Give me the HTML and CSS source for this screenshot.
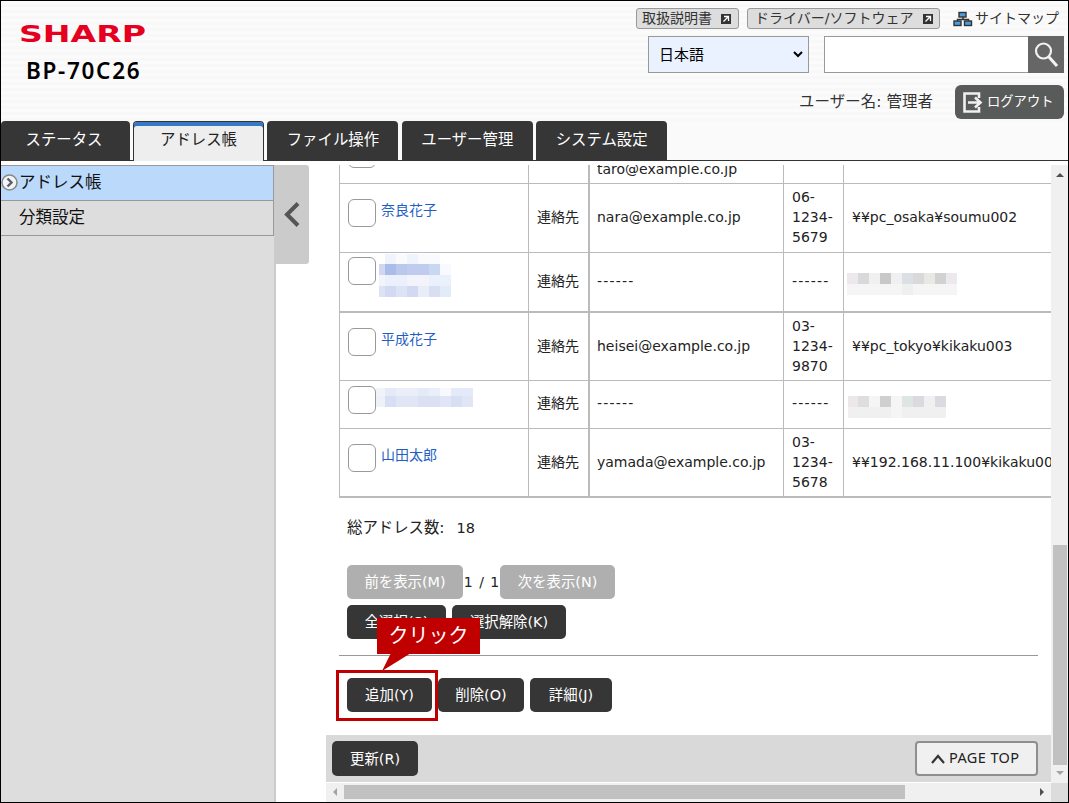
FILE: index.html
```
<!DOCTYPE html>
<html lang="ja">
<head>
  <meta charset="UTF-8" />
  <meta name="viewport" content="width=device-width, initial-scale=1.0" />
  <title>BP-70C26 アドレス帳</title>
  <link rel="stylesheet" href="styles.css">
</head>
<body>
  <div class="window">
    <header class="header">
      <div class="brand">
        <svg class="logo" width="130" height="24" viewBox="0 0 130 24">
          <text x="0" y="19" textLength="127" lengthAdjust="spacingAndGlyphs">SHARP</text>
        </svg>
        <h1 class="model">BP-70C26</h1>
      </div>
      <div class="tools">
        <div class="links">
          <a class="link-btn manual">取扱説明書
            <svg width="10" height="10" viewBox="0 0 10 10"><rect width="10" height="10" fill="#333"/><path d="M3 2.5h4.500v4.500M7.500 2.500L2.500 7.500" stroke="#fff" stroke-width="1.300" fill="none"/></svg>
          </a>
          <a class="link-btn driver">ドライバー/ソフトウェア
            <svg width="10" height="10" viewBox="0 0 10 10"><rect width="10" height="10" fill="#333"/><path d="M3 2.5h4.500v4.500M7.500 2.500L2.500 7.500" stroke="#fff" stroke-width="1.300" fill="none"/></svg>
          </a>
          <a class="sitemap">
            <svg width="20" height="16" viewBox="0 0 20 16">
              <path d="M10 5v4M4.500 11V8.500h11V11" stroke="#333" stroke-width="1.500" fill="none"/>
              <g fill="#4a9be0" stroke="#333" stroke-width="1.400">
                <rect x="6" y="1.500" width="7" height="4.500"/>
                <rect x="1" y="10" width="7" height="4.500"/>
                <rect x="11.500" y="10" width="7" height="4.500"/>
              </g>
            </svg>
            サイトマップ
          </a>
        </div>
        <div class="search-row">
          <div class="select"><span>日本語</span>
            <svg width="10" height="7" viewBox="0 0 10 7"><path d="M1 1l4 4 4-4" stroke="#000" stroke-width="2" fill="none"/></svg>
          </div>
          <div class="search">
            <div class="search-input"></div>
            <div class="search-btn">
              <svg width="36" height="37" viewBox="0 0 36 37"><circle cx="15.500" cy="15" r="7.500" stroke="#f2f2f2" stroke-width="2.200" fill="none"/><path d="M20.500 20.500l8.500 9.500" stroke="#f2f2f2" stroke-width="3"/></svg>
            </div>
          </div>
        </div>
        <div class="user-row">
          <span class="user">ユーザー名: 管理者</span>
          <a class="logout">
            <svg width="20" height="21" viewBox="0 0 20 21"><path d="M16 6V1.500H1.500v18H16V15" stroke="#f0f0f0" stroke-width="2.600" fill="none"/><path d="M5 10.500h12M12 5.500l5.500 5-5.500 5" stroke="#f0f0f0" stroke-width="2.600" fill="none"/></svg>
            <span>ログアウト</span>
          </a>
        </div>
      </div>
    </header>

    <nav class="tabs">
      <a class="tab first">ステータス</a>
      <a class="tab active">アドレス帳</a>
      <a class="tab">ファイル操作</a>
      <a class="tab">ユーザー管理</a>
      <a class="tab">システム設定</a>
    </nav>

    <div class="main">
      <aside class="sidebar">
        <a class="side-item selected">
          <svg class="side-icon" width="18" height="18" viewBox="0 0 18 18"><circle cx="8.500" cy="8.500" r="7.500" fill="#f4f4f4" stroke="#888" stroke-width="1.500"/><path d="M6.500 4.500l4 4-4 4" stroke="#555d70" stroke-width="2.400" fill="none"/></svg>
          <span>アドレス帳</span>
        </a>
        <a class="side-item"><span>分類設定</span></a>
      </aside>
      <div class="toggle">
        <svg width="16" height="25" viewBox="0 0 16 25"><path d="M14 1.500L3 12.500l11 11" stroke="#555" stroke-width="4" fill="none"/></svg>
      </div>

      <section class="pane">
        <div class="content">
          <table class="addresses">
            <colgroup><col class="c-name"><col class="c-type"><col class="c-mail"><col class="c-fax"><col class="c-path"></colgroup>
            <tr class="cut">
              <td class="name"><div><i class="check"></i></div></td>
              <td></td>
              <td><div>taro@example.co.jp</div></td>
              <td></td>
              <td></td>
            </tr>
            <tr class="r1">
              <td class="name tall"><i class="check"></i><a>奈良花子</a></td>
              <td>連絡先</td>
              <td>nara@example.co.jp</td>
              <td>06-<br>1234-<br>5679</td>
              <td>¥¥pc_osaka¥soumu002</td>
            </tr>
            <tr class="r2 thick">
              <td class="name"><i class="check"></i><svg class="mosaic-name" width="72" height="43" viewBox="0 0 72 43" shape-rendering="crispEdges">
                <path fill="#eff3fc" d="M6 0h11v10H6zM28 0h11v10H28z"/><path fill="#f9fafe" d="M17 0h11v10H17zM39 0h22v10H39z"/>
                <path fill="#d0d7ee" d="M0 10h6v11H0z"/><path fill="#a9bde8" d="M6 10h11v11H6z"/><path fill="#b9c8eb" d="M17 10h11v11H17z"/><path fill="#c0cced" d="M28 10h22v11H28z"/><path fill="#c9d7f1" d="M50 10h11v11H50z"/><path fill="#f8faff" d="M61 10h11v11H61z"/>
                <path fill="#f2f3fb" d="M0 21h72v11H0z"/><path fill="#eaf0fc" d="M6 21h22v11H6zM50 21h22v11H50z"/>
                <path fill="#dce3f4" d="M0 32h50v11H0z"/><path fill="#d1daf2" d="M6 32h11v11H6zM28 32h11v11H28z"/><path fill="#e9edf7" d="M39 32h11v11H39z"/><path fill="#d9def1" d="M50 32h11v11H50z"/><path fill="#e1ecf8" d="M61 32h11v11H61z"/>
              </svg></td>
              <td>連絡先</td>
              <td class="none">------</td>
              <td class="none">------</td>
              <td class="path-mosaic"><svg width="110" height="22" viewBox="0 0 110 22" shape-rendering="crispEdges">
                <path fill="#f5f5f5" d="M0 0h110v22H0z"/><path fill="#ece8ec" d="M0 0h11v11H0zM99 0h11v11H99z"/><path fill="#d9d9dc" d="M11 0h11v11H11zM66 0h11v11H66z"/><path fill="#f0f0f0" d="M22 0h11v11H22zM44 0h11v11H44z"/><path fill="#c8c8c8" d="M33 0h11v11H33z"/><path fill="#dae0e4" d="M55 0h11v11H55z"/><path fill="#e8e9e5" d="M77 0h11v11H77z"/><path fill="#d2d2d3" d="M88 0h11v11H88z"/><path fill="#eeefef" d="M55 11h11v11H55z"/>
              </svg></td>
            </tr>
            <tr class="r3">
              <td class="name tall"><i class="check"></i><a>平成花子</a></td>
              <td>連絡先</td>
              <td>heisei@example.co.jp</td>
              <td>03-<br>1234-<br>9870</td>
              <td>¥¥pc_tokyo¥kikaku003</td>
            </tr>
            <tr class="r4">
              <td class="name"><i class="check"></i><svg class="mosaic-name short" width="97" height="19" viewBox="0 0 97 19" shape-rendering="crispEdges">
                <path fill="#eaeef8" d="M0 0h97v8H0z"/><path fill="#f2f3f9" d="M0 0h9v8H0z"/><path fill="#e4eaf8" d="M9 0h11v8H9zM42 0h11v8H42zM75 0h22v8H75z"/><path fill="#f8f9fd" d="M64 0h11v8H64z"/>
                <path fill="#e0e6f5" d="M0 8h97v11H0z"/><path fill="#eef1fa" d="M0 8h9v11H0z"/><path fill="#d6dff3" d="M9 8h11v11H9zM75 8h11v11H75z"/><path fill="#dbe1f2" d="M42 8h22v11H42z"/>
              </svg></td>
              <td>連絡先</td>
              <td class="none">------</td>
              <td class="none">------</td>
              <td class="path-mosaic right"><svg width="99" height="22" viewBox="0 0 99 22" shape-rendering="crispEdges">
                <path fill="#f0f0f1" d="M0 0h98v22H0z"/><path fill="#ebe7eb" d="M0 0h10v11H0z"/><path fill="#dedede" d="M10 0h11v11H10z"/><path fill="#f5f5f5" d="M21 0h11v11H21zM43 0h11v22H43z"/><path fill="#d0cfd0" d="M32 0h11v11H32z"/><path fill="#dee5e5" d="M54 0h11v11H54z"/><path fill="#dadae0" d="M65 0h11v11H65zM87 0h11v11H87z"/>
              </svg></td>
            </tr>
            <tr class="r5 thick">
              <td class="name tall"><i class="check"></i><a>山田太郎</a></td>
              <td>連絡先</td>
              <td>yamada@example.co.jp</td>
              <td>03-<br>1234-<br>5678</td>
              <td>¥¥192.168.11.100¥kikaku005</td>
            </tr>
          </table>

          <p class="total">総アドレス数:<span>18</span></p>
          <div class="buttons pager">
            <button class="btn disabled w116">前を表示(M)</button><span class="page">1 / 1</span><button class="btn disabled w115">次を表示(N)</button>
          </div>
          <div class="buttons">
            <button class="btn w99">全選択(S)</button>
            <button class="btn w114">選択解除(K)</button>
          </div>
          <hr>
          <div class="buttons actions">
            <button class="btn w85">追加(Y)</button>
            <button class="btn w86">削除(O)</button>
            <button class="btn w82">詳細(J)</button>
          </div>
        </div>
        <footer class="footer">
          <button class="btn refresh w86">更新(R)</button>
          <a class="page-top">
            <svg width="14" height="10" viewBox="0 0 14 10"><path d="M1 9l6-7 6 7" stroke="#333" stroke-width="2.200" fill="none"/></svg>
            <span>PAGE TOP</span>
          </a>
        </footer>
        <div class="hscroll">
          <svg width="6" height="10" viewBox="0 0 6 10"><path d="M5 1v8L1 5z" fill="#a3a3a3"/></svg>
          <div class="thumb"></div>
          <svg width="6" height="10" viewBox="0 0 6 10"><path d="M1 1v8l4-4z" fill="#505050"/></svg>
        </div>

        <div class="callout">クリック
          <svg width="32" height="20" viewBox="0 0 32 20"><path d="M9 0h20L0 18z" fill="#c00000"/></svg>
        </div>
        <div class="highlight"></div>
      </section>

      <div class="vscroll">
        <svg width="10" height="6" viewBox="0 0 10 6"><path d="M1 5h8L5 1z" fill="#505050"/></svg>
        <div class="thumb"></div>
        <svg width="10" height="6" viewBox="0 0 10 6"><path d="M1 1h8L5 5z" fill="#a3a3a3"/></svg>
        <div class="corner"></div>
      </div>
    </div>
  </div>
</body>
</html>
```
FILE: styles.css
```
* {
  box-sizing: border-box;
}
body {
  margin: 0;
  font-family: "DejaVu Sans", "Noto Sans CJK JP", sans-serif;
  font-size: 14px;
  color: #222;
}
svg {
  display: block;
  flex: none;
}
.window {
  width: 1069px;
  height: 803px;
  border: 1px solid #000;
  background: #fff;
  overflow: hidden;
  display: flex;
  flex-direction: column;
}

/* header */
.header {
  height: 120px;
  flex: none;
  display: flex;
  justify-content: space-between;
  background: repeating-linear-gradient(#fbfbfb 0, #fbfbfb 3px, #f8f8f8 3px, #f8f8f8 6px);
}
.brand {
  padding: 22px 0 0 18px;
}
.logo text {
  font-family: "DejaVu Sans", sans-serif;
  font-weight: bold;
  font-size: 23.5px;
  fill: #e6001f;
}
.model {
  margin: 8px 0 0 7px;
  font-family: "Noto Sans", sans-serif;
  font-size: 22.5px;
  font-weight: 600;
  line-height: 32px;
  letter-spacing: 1.7px;
  color: #000;
}
.tools {
  width: 432px;
  padding: 7px 4px 0 0;
}
.links {
  display: flex;
  height: 21px;
  line-height: 19px;
  color: #333;
  white-space: nowrap;
}
.link-btn {
  display: flex;
  align-items: center;
  justify-content: space-between;
  border: 1px solid #999;
  border-radius: 3px;
  background: #ddd;
}
.manual {
  width: 103px;
  padding: 0 7px 0 5px;
  margin-right: 8px;
}
.driver {
  width: 193px;
  padding: 0 6px 0 7px;
  margin-right: 13px;
}
.sitemap {
  display: flex;
  align-items: center;
  gap: 2px;
}
.search-row {
  display: flex;
  gap: 15px;
  margin: 7px 0 0 12px;
  height: 37px;
}
.select {
  width: 161px;
  padding: 0 5px 0 10px;
  display: flex;
  align-items: center;
  justify-content: space-between;
  border: 1px solid #999;
  background: #ebf2ff;
  font-size: 15px;
  color: #000;
}
.select span {
  padding-bottom: 3px;
}
.search {
  display: flex;
  flex: 1;
}
.search-input {
  flex: 1;
  border: 1px solid #999;
  border-right: none;
  background: #fff;
}
.search-btn {
  background: #666;
}
.user-row {
  display: flex;
  justify-content: flex-end;
  align-items: center;
  gap: 22px;
  margin-top: 12px;
}
.user {
  padding-bottom: 4px;
  font-size: 15.4px;
  letter-spacing: 0.1px;
  color: #333;
  white-space: nowrap;
}
.logout {
  width: 109px;
  height: 34px;
  padding: 0 0 0 8px;
  display: flex;
  align-items: center;
  gap: 4px;
  border-radius: 6px;
  background: #595b5a;
  color: #fff;
  font-size: 13.3px;
  white-space: nowrap;
}
.logout span {
  padding-bottom: 4px;
}

/* tabs */
.tabs {
  display: flex;
  flex: none;
  gap: 3.4px;
  height: 40px;
  border-bottom: 1px solid #333;
  background: #fafafa;
}
.tab {
  width: 131px;
  height: 39px;
  line-height: 38px;
  text-align: center;
  border-radius: 4px 4px 0 0;
  background: #363636;
  color: #fff;
  font-size: 15.4px;
  white-space: nowrap;
}
.tab.first {
  width: 129px;
  padding-right: 3px;
  margin-right: -0.4px;
}
.tab.active {
  height: 40px;
  line-height: 33px;
  background: #eee;
  border: 1px solid #333;
  border-bottom: none;
  box-shadow: inset 0 4px #367ac3;
  padding-top: 2px;
  color: #222;
}

/* body */
.main {
  display: flex;
  flex: 1;
  padding-top: 4px;
  min-height: 0;
}
.sidebar {
  width: 275px;
  border-right: 2px solid #cbcbcb;
  background: #ddd;
}
.side-item {
  display: flex;
  align-items: center;
  height: 35px;
  padding: 0 0 4px 18px;
  border: solid #999;
  border-width: 0 1px 1px 0;
  font-size: 16.5px;
  color: #111;
}
.side-item.selected {
  height: 36px;
  padding: 0 0 5px 0;
  border-top-width: 1px;
  background: #bbd9fa;
}
.side-icon {
  margin-top: 5px;
}
.toggle {
  width: 33px;
  height: 99px;
  padding-right: 2px;
  display: flex;
  align-items: center;
  justify-content: center;
  background: #cbcbcb;
  border-radius: 0 3px 3px 0;
}
.pane {
  position: relative;
  display: flex;
  flex-direction: column;
  width: 725px;
  margin-left: 17px;
  overflow: hidden;
}
.content {
  flex: 1;
  padding-left: 13px;
  min-height: 0;
  overflow: hidden;
}

/* address table */
.addresses {
  table-layout: fixed;
  width: 784px;
  border-spacing: 0;
  border-left: 1px solid #bbb;
}
.c-name { width: 189px; }
.c-type { width: 61px; }
.c-mail { width: 194px; }
.c-fax { width: 60px; }
.c-path { width: 279px; }
.addresses td {
  padding: 0 0 3px 8px;
  line-height: 20px;
  border-right: 1px solid #bbb;
  border-bottom: 1px solid #bbb;
  white-space: nowrap;
}
.addresses td:nth-child(2) {
  border-right-width: 2px;
}
.addresses td:nth-child(3) {
  padding-left: 7px;
}
.addresses .thick td {
  border-bottom-width: 2px;
}
.addresses .r3 td,
.addresses .r5 td {
  padding-bottom: 1px;
}
.r1 { height: 69px; }
.r2 { height: 60px; }
.r3 { height: 68px; }
.r4 { height: 48px; }
.r5 { height: 69px; }
.addresses .cut td {
  height: 19px;
  padding-bottom: 0;
}
.cut div {
  display: flex;
  align-items: flex-end;
  height: 18px;
  padding-bottom: 4px;
  overflow: hidden;
}
.cut .name div {
  padding-bottom: 15px;
}
.addresses .name {
  vertical-align: top;
  padding-top: 4px;
}
.addresses .cut .name {
  padding-top: 0;
}
.addresses .r4 .name {
  padding-top: 5px;
}
.addresses .name.tall {
  padding-top: 15px;
}
.addresses .none {
  letter-spacing: 1.2px;
}
.addresses .path-mosaic {
  padding: 4px 0 0 3px;
}
.addresses .path-mosaic.right {
  padding-left: 4px;
}
.check {
  display: block;
  float: left;
  flex: none;
  width: 28px;
  height: 28px;
  margin-right: 5px;
  border: 1px solid #999;
  border-radius: 6px;
  background: #fff;
}
.name a {
  display: block;
  padding-top: 1px;
  color: #1f5fc4;
}
/* the mosaics sit closer to the checkbox than a name does */
.name .check:has(+ svg) {
  margin-right: 3px;
}
.r4 .name .check:has(+ svg) {
  margin-right: 0;
}
.mosaic-name {
  margin-top: -3px;
}
.mosaic-name.short {
  margin-top: 2px;
}

.total {
  margin: 19px 0 0 8px;
  font-size: 15.4px;
  line-height: 22px;
}
.total span {
  margin-left: 12px;
  font-size: 14.5px;
}
.buttons {
  display: flex;
  gap: 6px;
  margin: 6px 0 0 8px;
}
.pager {
  gap: 0;
  margin-top: 26px;
}
.page {
  width: 37px;
  line-height: 34px;
  text-align: center;
  word-spacing: 2px;
  white-space: nowrap;
}
.btn {
  height: 34px;
  padding: 0 0 3px;
  border: none;
  border-radius: 5px;
  background: #363636;
  color: #fff;
  font-family: inherit;
  font-size: 14.4px;
  white-space: nowrap;
}
.btn.disabled {
  background: #afafaf;
}
.w82 { width: 82px; }
.w85 { width: 85px; }
.w86 { width: 86px; }
.w99 { width: 99px; }
.w114 { width: 114px; }
.w115 { width: 115px; }
.w116 { width: 116px; }
hr {
  width: 699px;
  height: 1px;
  margin: 16px 0 0;
  border: none;
  background: #999;
}
.actions {
  margin-top: 22px;
}

.footer {
  flex: none;
  display: flex;
  justify-content: space-between;
  height: 47px;
  padding: 6px 13px 0 6px;
  background: #d9d9d9;
}
.refresh {
  height: 35px;
}
.page-top {
  display: flex;
  align-items: center;
  gap: 4px;
  width: 123px;
  height: 35px;
  padding-left: 14px;
  border: 2px solid #8f8f8f;
  border-radius: 4px;
  background: #f0f0f0;
  font-family: "Noto Sans", sans-serif;
  font-size: 14.5px;
  letter-spacing: 0.4px;
  white-space: nowrap;
}
.page-top span {
  padding-bottom: 3px;
}

/* scrollbars */
.hscroll {
  flex: none;
  display: flex;
  align-items: center;
  justify-content: space-between;
  height: 19px;
  margin-top: 1px;
  padding: 0 6px 2px 6px;
  background: #f0f0f0;
}
.hscroll .thumb {
  width: 561px;
  height: 14px;
  margin: 0 auto 0 6px;
  background: #c1c1c1;
}
.vscroll {
  width: 17px;
  display: flex;
  flex-direction: column;
  align-items: center;
  padding-top: 7px;
  background: #f0f0f0;
}
.vscroll .thumb {
  width: 14px;
  height: 220px;
  margin: 367px 0 5px;
  background: #c1c1c1;
}
.corner {
  width: 17px;
  height: 19px;
  margin-top: auto;
  background: #dcdcdc;
}

/* annotation over the page */
.callout {
  position: absolute;
  left: 51px;
  top: 453px;
  width: 103px;
  height: 36px;
  line-height: 37px;
  text-align: center;
  background: #c00000;
  color: #fff;
  font-size: 20px;
}
.callout svg {
  position: absolute;
  left: 5px;
  top: 35px;
}
.highlight {
  position: absolute;
  left: 10px;
  top: 505px;
  width: 102px;
  height: 51px;
  border: 3px solid #c00000;
}
```
